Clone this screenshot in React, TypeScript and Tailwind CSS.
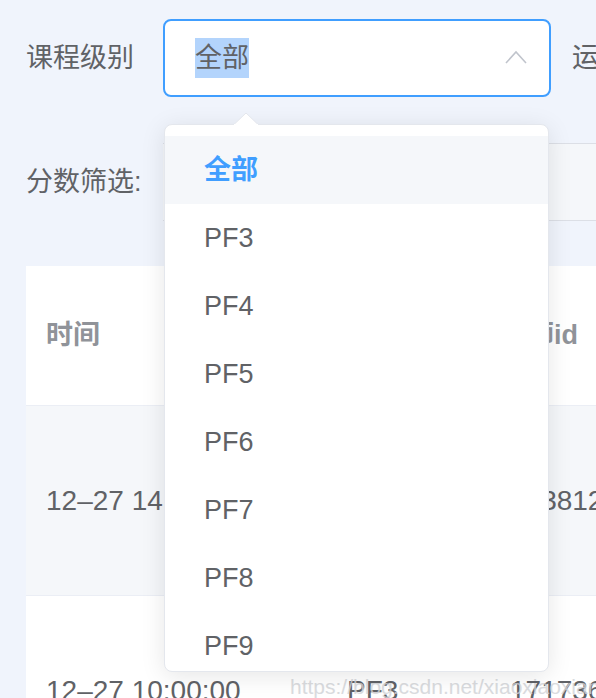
import React from "react";

const font = { fontFamily: '"Liberation Sans","Noto Sans CJK SC",sans-serif' };

const items = ["全部", "PF3", "PF4", "PF5", "PF6", "PF7", "PF8", "PF9"];

export default function App() {
  return (
    <div
      className="relative w-[596px] h-[698px] overflow-hidden bg-[#f0f4fc] text-[#606266]"
      style={font}
    >
      {/* form row 1 */}
      <div className="flex items-center pt-[19px] pl-[26px]">
        <div className="w-[137px] shrink-0 text-[27px] leading-[40px] whitespace-nowrap">课程级别</div>
        <div className="w-[388px] h-[78px] shrink-0 rounded-[8px] border-2 border-[#409eff] bg-white flex items-center pl-[30px] pr-[22px]">
          <span className="text-[27px] leading-[40px] bg-[#b3d4fc] text-[#606266]">全部</span>
          <div className="flex-1" />
          <svg width="22" height="14" viewBox="0 0 22 14" className="mt-[-2px]">
            <polyline points="1,13 11,2 21,13" fill="none" stroke="#c0c4cc" strokeWidth="1.6" />
          </svg>
        </div>
        <div className="ml-[21px] shrink-0 text-[27px] leading-[40px] whitespace-nowrap">运动类型</div>
      </div>

      {/* form row 2 */}
      <div className="flex items-center mt-[46px] pl-[26px]">
        <div className="w-[137px] shrink-0 text-[27px] leading-[40px] whitespace-nowrap">分数筛选:</div>
        <div className="w-[480px] h-[78px] shrink-0 border-y border-[#dcdfe6] bg-[#f5f7fa]" />
      </div>

      {/* table */}
      <div className="mt-[45px] ml-[26px] w-[600px] bg-white">
        <div className="flex h-[140px] items-center border-b border-[#ebeef5] text-[27px] font-bold text-[#909399]">
          <div className="w-[301px] shrink-0 pl-[20px]">时间</div>
          <div className="w-[173px] shrink-0 pl-[20px]">级别</div>
          <div className="shrink-0 whitespace-nowrap">教师id</div>
        </div>
        <div className="flex h-[190px] items-center border-b border-[#ebeef5] bg-[#f5f7fa] text-[28px]">
          <div className="w-[301px] shrink-0 pl-[20px] whitespace-nowrap">12–27 14:00:00</div>
          <div className="w-[173px] shrink-0 pl-[20px]">PF4</div>
          <div className="shrink-0 pl-[10px] whitespace-nowrap">173812946</div>
        </div>
        <div className="flex h-[190px] items-center text-[28px]">
          <div className="w-[301px] shrink-0 pl-[20px] whitespace-nowrap">12–27 10:00:00</div>
          <div className="w-[173px] shrink-0 pl-[20px]">PF3</div>
          <div className="shrink-0 pl-[10px] whitespace-nowrap">171736215</div>
        </div>
      </div>

      {/* watermark */}
      <div className="absolute left-[290px] top-[671px] text-[21px] text-[#d2d4d8] opacity-80 whitespace-nowrap">
        https://blog.csdn.net/xiaoxiaoxian666
      </div>

      {/* dropdown popup */}
      <svg width="24" height="13" viewBox="0 0 24 13" className="absolute left-[234px] top-[112px] z-20">
        <polygon points="0,12.5 12,1 24,12.5" fill="#ffffff" stroke="#e4e7ed" strokeWidth="1" />
        <rect x="0" y="12" width="24" height="2" fill="#ffffff" />
      </svg>
      <div className="absolute left-[164px] top-[124px] w-[385px] h-[548px] z-10 overflow-hidden rounded-[8px] border border-[#e4e7ed] bg-white shadow-[0_4px_24px_rgba(0,0,0,0.1)]">
        <div className="pt-[11px]">
          {items.map((it, i) => (
            <div
              key={it}
              className={
                i === 0
                  ? "h-[68px] flex items-center pl-[39px] bg-[#f5f7fa] text-[#409eff] font-bold text-[27px]"
                  : "h-[68px] flex items-center pl-[39px] text-[#606266] text-[27px]"
              }
            >
              {it}
            </div>
          ))}
        </div>
      </div>
    </div>
  );
}
